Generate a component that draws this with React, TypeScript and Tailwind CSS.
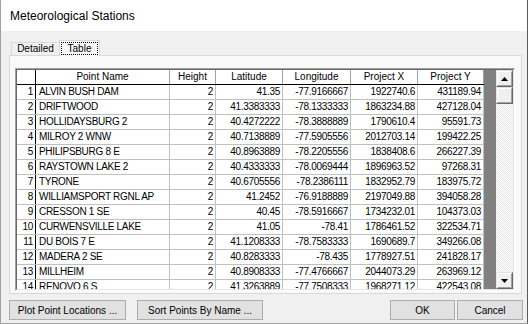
import React from "react";

type Row = [string, string, string, string, string, string];

const rows: Row[] = [
  ["ALVIN BUSH DAM", "2", "41.35", "-77.9166667", "1922740.6", "431189.94"],
  ["DRIFTWOOD", "2", "41.3383333", "-78.1333333", "1863234.88", "427128.04"],
  ["HOLLIDAYSBURG 2", "2", "40.4272222", "-78.3888889", "1790610.4", "95591.73"],
  ["MILROY 2 WNW", "2", "40.7138889", "-77.5905556", "2012703.14", "199422.25"],
  ["PHILIPSBURG 8 E", "2", "40.8963889", "-78.2205556", "1838408.6", "266227.39"],
  ["RAYSTOWN LAKE 2", "2", "40.4333333", "-78.0069444", "1896963.52", "97268.31"],
  ["TYRONE", "2", "40.6705556", "-78.2386111", "1832952.79", "183975.72"],
  ["WILLIAMSPORT RGNL AP", "2", "41.2452", "-76.9188889", "2197049.88", "394058.28"],
  ["CRESSON 1 SE", "2", "40.45", "-78.5916667", "1734232.01", "104373.03"],
  ["CURWENSVILLE LAKE", "2", "41.05", "-78.41", "1786461.52", "322534.71"],
  ["DU BOIS 7 E", "2", "41.1208333", "-78.7583333", "1690689.7", "349266.08"],
  ["MADERA 2 SE", "2", "40.8283333", "-78.435", "1778927.51", "241828.17"],
  ["MILLHEIM", "2", "40.8908333", "-77.4766667", "2044073.29", "263969.12"],
  ["RENOVO 6 S", "2", "41.3263889", "-77.7508333", "1968271.12", "422543.08"],
];

const numCols = ["w-[46px]", "w-[67px]", "w-[68px]", "w-[67px]", "w-[66px]"];

function ScrollBtn({ up }: { up: boolean }) {
  return (
    <div className="h-[17px] w-[17px] shrink-0 border border-t-[#e3e3e3] border-l-[#e3e3e3] border-b-[#696969] border-r-[#696969]">
      <div className="h-full w-full border border-t-white border-l-white border-b-[#a0a0a0] border-r-[#a0a0a0] bg-[#f0f0f0] flex items-center justify-center">
        <svg width="7" height="4" viewBox="0 0 7 4">
          {up ? (
            <polygon points="3.5,0 7,4 0,4" fill="#000" />
          ) : (
            <polygon points="0,0 7,0 3.5,4" fill="#000" />
          )}
        </svg>
      </div>
    </div>
  );
}

function Grid() {
  return (
    <div className="w-[500px] h-[223px] border border-t-[#a0a0a0] border-l-[#a0a0a0] border-r-white border-b-white">
      <div className="w-full h-full border border-t-[#696969] border-l-[#696969] border-r-[#e3e3e3] border-b-[#e3e3e3] flex overflow-hidden">
        <div className="w-[467px] h-full flex flex-col overflow-hidden bg-white text-black leading-none">
          <div className="flex h-[15px] shrink-0 border-b border-black text-[10px]">
            <div className="w-[19px] shrink-0 border-r border-black" />
            <div className="w-[134px] shrink-0 border-r border-[#a0a0a0] flex items-center justify-center">Point Name</div>
            {["Height", "Latitude", "Longitude", "Project X", "Project Y"].map((h, i) => (
              <div key={h} className={`${numCols[i]} shrink-0 border-r border-[#a0a0a0] flex items-center justify-center`}>
                {h}
              </div>
            ))}
          </div>
          {rows.map((r, idx) => (
            <div key={idx} className="flex h-[15px] shrink-0 border-b border-[#c0c0c0] text-[10px] tracking-[-0.3px]">
              <div className="w-[19px] shrink-0 border-r border-black flex items-center justify-end pr-[2px]">{idx + 1}</div>
              <div className="w-[134px] shrink-0 border-r border-[#c0c0c0] flex items-center pl-[3px] whitespace-nowrap overflow-hidden">{r[0]}</div>
              {r.slice(1).map((v, i) => (
                <div key={i} className={`${numCols[i]} shrink-0 border-r border-[#c0c0c0] flex items-center justify-end pr-[2px] whitespace-nowrap overflow-hidden`}>
                  {v}
                </div>
              ))}
            </div>
          ))}
        </div>
        <div className="w-[12px] shrink-0 h-full bg-[#808080]" />
        <div className="w-[17px] shrink-0 h-full flex flex-col bg-[repeating-conic-gradient(#ffffff_0_25%,#e6e6e6_0_50%)] bg-[length:2px_2px]">
          <ScrollBtn up />
          <div className="h-[17px] w-[17px] shrink-0 border border-t-[#e3e3e3] border-l-[#e3e3e3] border-b-[#696969] border-r-[#696969]">
            <div className="h-full w-full border border-t-white border-l-white border-b-[#a0a0a0] border-r-[#a0a0a0] bg-[#f0f0f0]" />
          </div>
          <div className="flex-1" />
          <ScrollBtn up={false} />
        </div>
      </div>
    </div>
  );
}

export default function App() {
  return (
    <div className="w-[528px] h-[324px] flex flex-col border-l border-r border-b border-l-[#a0a0a0] border-r-[#5a5a5a] border-b-[#a0a0a0] bg-[#f0f0f0] overflow-hidden font-['Liberation_Sans',Arial,sans-serif] text-black">
      <div className="h-[31px] shrink-0 bg-white flex items-center pl-[9px] text-[12px]">Meteorological Stations</div>
      <div className="flex-1 flex flex-col pt-[9px]">
        <div className="flex items-end h-[15px] pl-[10px] relative z-10 text-[10px]">
          <div className="h-[13px] w-[49px] border border-b-0 border-[#d9d9d9] bg-[#f0f0f0] flex items-center justify-center leading-none">
            Detailed
          </div>
          <div className="h-[16px] w-[41px] -ml-px -mb-px border border-b-0 border-[#d9d9d9] bg-[#f9f9f9] px-px pt-px">
            <div className="h-[13px] border border-dotted border-black flex items-center justify-center leading-none">Table</div>
          </div>
        </div>
        <div className="ml-[8px] w-[513px] h-[239px] shrink-0 border border-[#d9d9d9] bg-[#f9f9f9] pl-[5px] pt-[12px]">
          <Grid />
        </div>
        <div className="flex mt-[6px] pl-[8px] pr-[4px] h-[20px] shrink-0 text-[10px]">
          <div className="w-[117px] border border-[#adadad] bg-[#e1e1e1] flex items-center justify-center">Plot Point Locations ...</div>
          <div className="w-[126px] ml-[11px] border border-[#adadad] bg-[#e1e1e1] flex items-center justify-center">Sort Points By Name ...</div>
          <div className="w-[65px] ml-auto border border-[#adadad] bg-[#e1e1e1] flex items-center justify-center">OK</div>
          <div className="w-[66px] ml-[2px] border border-[#adadad] bg-[#e1e1e1] flex items-center justify-center">Cancel</div>
        </div>
      </div>
    </div>
  );
}
